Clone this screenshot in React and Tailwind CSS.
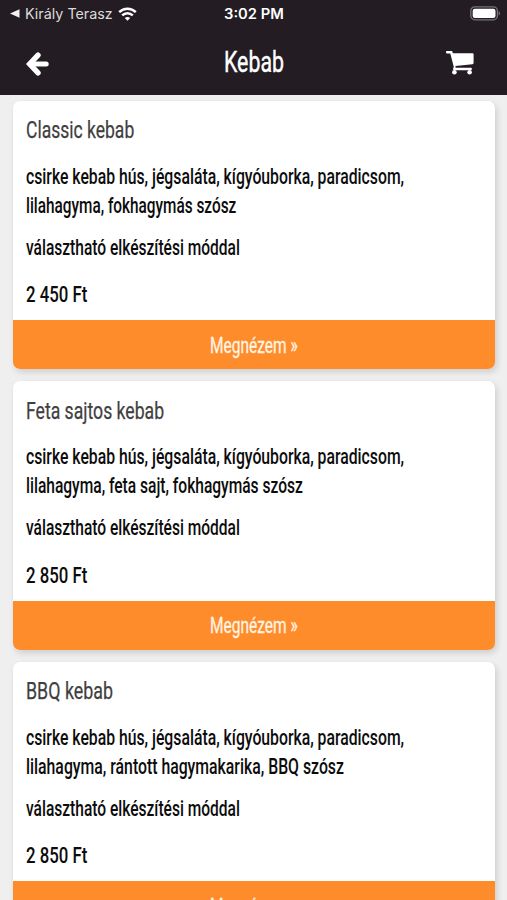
import React, { useLayoutEffect, useRef, useState } from 'react';

const items = [
  {
    name: 'Classic kebab',
    nameWidth: 108,
    lines: [
      { text: 'csirke kebab hús, jégsaláta, kígyóuborka, paradicsom,', width: 378 },
      { text: 'lilahagyma, fokhagymás szósz', width: 210 },
    ],
    price: '2 450 Ft',
  },
  {
    name: 'Feta sajtos kebab',
    nameWidth: 138,
    lines: [
      { text: 'csirke kebab hús, jégsaláta, kígyóuborka, paradicsom,', width: 378 },
      { text: 'lilahagyma, feta sajt, fokhagymás szósz', width: 277 },
    ],
    price: '2 850 Ft',
  },
  {
    name: 'BBQ kebab',
    nameWidth: 87,
    lines: [
      { text: 'csirke kebab hús, jégsaláta, kígyóuborka, paradicsom,', width: 378 },
      { text: 'lilahagyma, rántott hagymakarika, BBQ szósz', width: 318 },
    ],
    price: '2 850 Ft',
  },
];

// Squeezes its text horizontally to the given width
const Narrow = ({ width, className = '', children }) => {
  const ref = useRef(null);
  const [scale, setScale] = useState(1);

  useLayoutEffect(() => {
    setScale(width / ref.current.offsetWidth);
  }, [width, children]);

  return (
    <div className={className} style={{ width }}>
      <span
        ref={ref}
        className="inline-block origin-left whitespace-nowrap align-top"
        style={{ transform: `scaleX(${scale})` }}
      >
        {children}
      </span>
    </div>
  );
};

const StatusBar = () => (
  <div className="grid h-[27px] grid-cols-[1fr_auto_1fr] items-center px-[7px] text-white">
    <div className="flex items-center pl-[3px]">
      <svg width="10" height="9" viewBox="0 0 10 9" fill="#f2f0f1">
        <path d="M0 4.5 9.5 0.3v8.4z" />
      </svg>
      <Narrow width={88} className="ml-[5px] font-['Inter'] text-[14px] leading-[27px] text-[#dddadc]">
        Király Terasz
      </Narrow>
      <svg className="ml-[5px]" width="19" height="14" viewBox="0 0 19 14" fill="none" stroke="white" strokeWidth="2.5">
        <path d="M1.2 5.2C5.8 0.6 13.2 0.6 17.8 5.2" />
        <path d="M4.2 8.4c3-3 7.6-3 10.6 0" />
        <path d="M9.5 13.8 6.8 11c1.5-1.4 3.9-1.4 5.4 0z" fill="white" stroke="none" />
      </svg>
    </div>
    <Narrow width={60} className="font-['Inter'] text-[14px] font-semibold leading-[27px]">
      3:02 PM
    </Narrow>
    <svg className="-mr-px justify-self-end" width="31" height="15" viewBox="0 0 31 15">
      <rect x="0.8" y="0.8" width="26.6" height="13" rx="4" fill="none" stroke="#77717a" strokeWidth="1.3" />
      <rect x="2.7" y="2.7" width="22.8" height="9.2" rx="2.2" fill="white" />
      <path d="M28.6 5c1.9 0.8 1.9 3.8 0 4.6z" fill="#77717a" />
    </svg>
  </div>
);

const CartIcon = () => (
  <svg width="28" height="24" viewBox="0 0 28 24" fill="white">
    <path d="M0.9 0h4.3c.9 0 1.3.4 1.4 1.2l.2 1h19.6c.7 0 1.2.5 1.2 1.2v8.7c0 .7-.4 1.1-1.1 1.2L9.4 14.9l.3 1.9h15c.7 0 1.2.5 1.2 1.200s-.5 1.200-1.2 1.200H8.2c-.7 0-1.2-.5-1.2-1.200 0-.5.4-1.100.8-2L4.300 2.400H.9C.3 2.400 0 1.800 0 1.200S.3 0 .9 0z" />
    <circle cx="8.4" cy="21.2" r="2.3" />
    <circle cx="23.6" cy="21.2" r="2.3" />
  </svg>
);

const Header = () => (
  <header className="h-[94.5px] bg-[#231c22]">
    <StatusBar />
    <div className="grid h-[67px] grid-cols-[1fr_auto_1fr] items-center px-[26px] pt-[3px] text-white">
      <svg className="mt-[3px]" width="24" height="24" viewBox="0 0 24 24" fill="none" stroke="white" strokeWidth="5.4" strokeLinecap="round">
        <path d="M12 3.1 3.6 12l8.4 8.9" strokeLinejoin="miter" />
        <path d="M4 12h16.200" strokeWidth="5" />
      </svg>
      <Narrow width={60} className="font-['Roboto'] text-[29.5px] leading-[36px] [-webkit-text-stroke:0.4px_white]">
        Kebab
      </Narrow>
      <div className="flex justify-end pr-[7px] pt-[2px]">
        <CartIcon />
      </div>
    </div>
  </header>
);

const KebabCard = ({ item }) => (
  <div className="h-[268.5px] shrink-0 overflow-hidden rounded-[7px] bg-white shadow-[2px_3px_6px_rgba(0,0,0,0.14)]">
    <div className="h-[219.5px] px-[12.5px] pt-[15.5px] font-['Roboto'] text-[22px] leading-[29px] text-[#0c0c0c]">
      <Narrow width={item.nameWidth} className="text-[24px] text-[#3f3f3f] [-webkit-text-stroke:0.25px_#3f3f3f]">
        {item.name}
      </Narrow>
      <div className="mt-[16.5px] font-medium">
        {item.lines.map((line) => (
          <Narrow key={line.text} width={line.width}>
            {line.text}
          </Narrow>
        ))}
      </div>
      <Narrow width={214} className="mt-[13px] font-medium">
        választható elkészítési móddal
      </Narrow>
      <Narrow width={61} className="mt-[18.5px] font-medium">
        {item.price}
      </Narrow>
    </div>
    <button className="flex h-[49px] w-full items-center justify-center bg-[#ff8c2b] pt-[1px] text-left font-['Roboto'] text-[22px] leading-[29px] text-[#fff4e4] [-webkit-text-stroke:0.3px_#fff4e4]">
      <Narrow width={88}>Megnézem »</Narrow>
    </button>
  </div>
);

const App = () => {
  return (
    <div className="h-[900px] w-[507px] overflow-hidden bg-[#efefef]">
      <Header />
      <main className="flex flex-col gap-3 pl-[13px] pr-[12.5px] pt-[6px]">
        {items.map((item) => (
          <KebabCard key={item.name} item={item} />
        ))}
      </main>
    </div>
  );
};

export default App;
